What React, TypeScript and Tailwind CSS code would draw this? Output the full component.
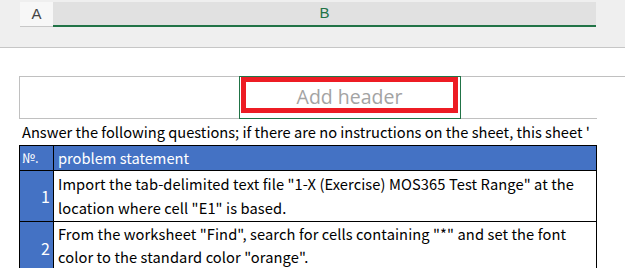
export default function App() {
  const body = { fontFamily: '"Noto Sans CJK JP", "Noto Sans", sans-serif' };
  return (
    <div className="w-[625px] h-[268px] overflow-hidden bg-white" style={body}>
      {/* column headers */}
      <div className="h-[48px] bg-[#efefef] border-b border-[#c6c6c6] pt-[2px] pl-[20px] flex items-start">
        <div className="w-[33px] h-[25px] bg-[#f7f7f7] border-b border-[#c8c8c8] flex items-center justify-center text-[15px] text-[#444] font-['Liberation_Sans',sans-serif]">
          A
        </div>
        <div className="w-[543px] h-[25px] bg-[#e1e1e1] border-b-2 border-[#217346] flex items-center justify-center text-[15px] text-[#217346] font-['Liberation_Sans',sans-serif]">
          B
        </div>
      </div>

      {/* page header area */}
      <div className="flex mt-[28px] h-[43px]">
        <div className="ml-[19px] w-[220px] border-y border-l border-[#c0c0c0]" />
        <div className="w-[222px] border border-[#217346] pl-px">
          <div className="w-[217px] h-[36px] pt-[3px] border-[5px] border-[#ed1c24] flex items-center justify-center text-[19.5px] text-[#a3a3a3] font-['Open_Sans',sans-serif]">
            Add header
          </div>
        </div>
        <div className="w-[136px] border-y border-[#c0c0c0]" />
        <div className="flex-1 border-t border-[#c0c0c0]" />
      </div>

      <div className="ml-[19px] w-[578px] h-[26px] pl-[3px] overflow-hidden whitespace-nowrap text-[14.67px] leading-[25px] text-black">
        Answer the following questions; if there are no instructions on the sheet, this sheet '
      </div>

      {/* problem table */}
      <div className="ml-[19px] w-[578px] text-[14.67px] text-black">
        <div className="flex h-[26px] border border-black bg-[#4472c4] text-white">
          <div className="w-[34px] border-r border-black pl-[2px] leading-[24px] text-[13px]">№.</div>
          <div className="flex-1 pl-[4px] leading-[24px]">problem statement</div>
        </div>
        <div className="flex h-[51px] border-x border-b border-black">
          <div className="w-[34px] bg-[#4472c4] border-r border-black text-white text-[16px] flex items-center justify-end pr-[3px]">
            1
          </div>
          <div className="flex-1 pl-[4px] pt-px leading-[24px] tracking-[0.1px]">
            Import the tab-delimited text file "1-X (Exercise) MOS365 Test Range" at the
            <br />
            location where cell "E1" is based.
          </div>
        </div>
        <div className="flex h-[47px] border-x border-black">
          <div className="w-[34px] bg-[#4472c4] border-r border-black text-white text-[16px] flex items-center justify-end pr-[3px] pt-[4px]">
            2
          </div>
          <div className="flex-1 pl-[4px] leading-[23px] tracking-[0.1px]">
            From the worksheet "Find", search for cells containing "*" and set the font
            <br />
            color to the standard color "orange".
          </div>
        </div>
      </div>
    </div>
  );
}
